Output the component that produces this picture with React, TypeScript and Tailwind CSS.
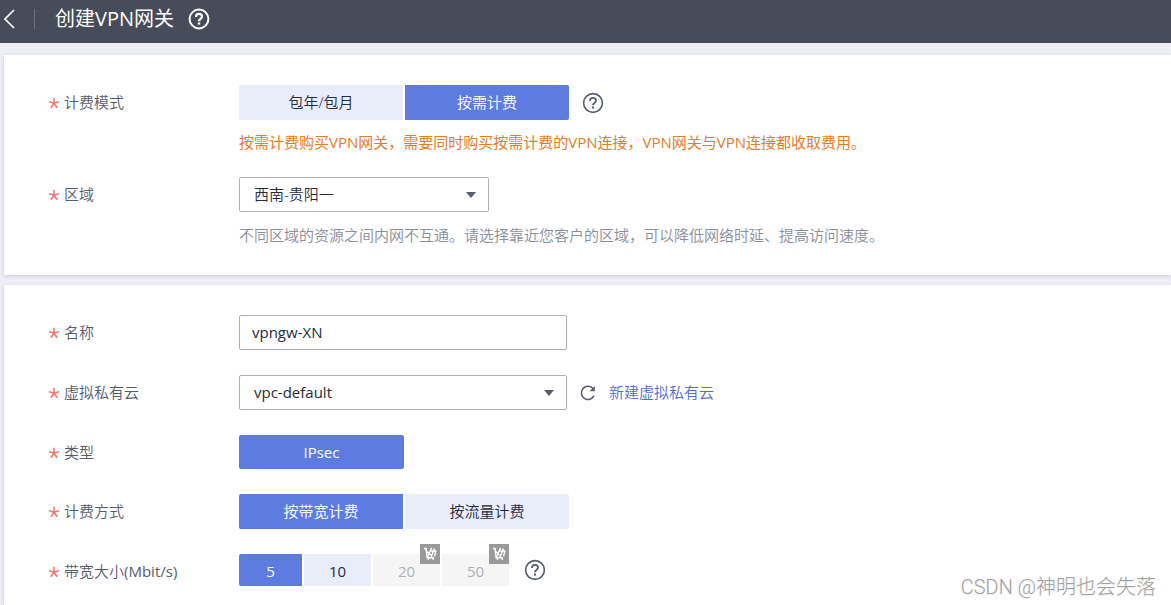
import type { ReactNode } from "react";
import { useState } from "react";

function HelpIcon({ className, width = 1.6 }: { className: string; width?: number }) {
  return (
    <svg viewBox="0 0 22 22" fill="none" stroke="currentColor" strokeWidth={width} className={className}>
      <circle cx="11" cy="11" r="9.4" />
      <path d="M8 8.9C8 6.9 9.2 5.9 11 5.9s3 1 3 2.6c0 1.2-.7 1.8-1.6 2.5-.9.6-1.4 1-1.4 2.3" strokeWidth={width + 0.2} />
      <path d="M11 14.5v2.1" strokeWidth={width + 0.5} />
    </svg>
  );
}

function CartIcon() {
  return (
    <svg viewBox="0 0 20 20" fill="none" stroke="white" className="h-5 w-5">
      <path d="M4 4.4h2l1.2 9.4h6.6" strokeWidth="1.5" />
      <path d="M6.4 7.2l5.6 4.6M11.6 3.8L8 12.6M9.4 7h6.4l-1.2 5.4M14.4 4.6l-3.4 8.6" strokeWidth="1.4" />
      <circle cx="8.4" cy="15" r="0.7" fill="white" strokeWidth="0.6" />
      <circle cx="13.2" cy="15" r="0.7" fill="white" strokeWidth="0.6" />
    </svg>
  );
}

function Required() {
  return (
    <svg viewBox="0 0 12 12" fill="none" stroke="#f66f6a" strokeWidth="1.5" aria-hidden="true" className="mt-0.5 h-3 w-3 shrink-0">
      <path d="M6 .8v5.4M.8 4.6L6 6.2l5.2-1.6M2.8 10.8L6 6.2l3.2 4.6" />
    </svg>
  );
}

type RowProps = {
  label: string;
  unit?: string;
  htmlFor?: string;
  children: ReactNode;
};

function Row({ label, unit, htmlFor, children }: RowProps) {
  return (
    <div className="flex items-start">
      <div className="flex h-[33px] w-[191px] shrink-0 items-center gap-1 text-[#575d6c]">
        <Required />
        {htmlFor ? (
          <label htmlFor={htmlFor}>{label}</label>
        ) : (
          <span>
            {label}
            {unit && <span className="font-normal">({unit})</span>}
          </span>
        )}
      </div>
      <div className="min-w-0 flex-1">{children}</div>
    </div>
  );
}

type SegmentsProps = {
  label: string;
  options: string[];
  value: string;
  onChange: (value: string) => void;
};

function Segments({ label, options, value, onChange }: SegmentsProps) {
  return (
    <div role="group" aria-label={label} className="flex gap-0.5">
      {options.map((option) => (
        <button
          key={option}
          type="button"
          aria-pressed={option === value}
          onClick={() => onChange(option)}
          className={
            option === value
              ? "h-[35px] w-[164px] bg-[#5e7ce0] pb-0.5 text-white first:rounded-l-xs last:rounded-r-xs"
              : "h-[35px] w-[164px] bg-[#e9edfa] pb-0.5 text-[#252b3a] first:rounded-l-xs last:rounded-r-xs"
          }
        >
          {option}
        </button>
      ))}
    </div>
  );
}

function Select({ id, options, className }: { id: string; options: string[]; className: string }) {
  return (
    <div className={`relative ${className}`}>
      <select
        id={id}
        className="block h-[35px] w-full appearance-none rounded-xs border border-[#adb0b8] bg-white px-3.5 pb-0.5 text-[#252b3a]"
      >
        {options.map((option) => (
          <option key={option}>{option}</option>
        ))}
      </select>
      <svg viewBox="0 0 10 6" className="pointer-events-none absolute top-[15px] right-[13px] h-1.5 w-2.5 fill-[#575d6c]">
        <path d="M0 0h10L5 6z" />
      </svg>
    </div>
  );
}

const bandwidths = [
  { size: 5, soldOut: false },
  { size: 10, soldOut: false },
  { size: 20, soldOut: true },
  { size: 50, soldOut: true },
];

export default function App() {
  const [billing, setBilling] = useState("按需计费");
  const [method, setMethod] = useState("按带宽计费");
  const [bandwidth, setBandwidth] = useState(5);
  const [name, setName] = useState("vpngw-XN");

  return (
    <div className="relative flex min-h-screen flex-col bg-[#eeeff6] font-['Open_Sans','Noto_Sans_CJK_SC',sans-serif] text-[15px] leading-5 font-[360]">
      <header className="flex h-[43px] items-center bg-[#464c59] pb-1.5 text-white">
        <button type="button" aria-label="返回" className="pl-1">
          <svg viewBox="0 0 11 20" fill="none" stroke="currentColor" strokeWidth="1.6" className="h-5 w-[11px]">
            <path d="M10 1L1 10l9 9" />
          </svg>
        </button>
        <span className="ml-[19px] h-5 w-px bg-[#6c717d]" />
        <h1 className="ml-5 text-xl leading-7 font-normal">创建VPN网关</h1>
        <button type="button" aria-label="帮助" className="ml-3.5">
          <HelpIcon className="h-[22px] w-[22px]" width={2} />
        </button>
      </header>

      <main className="mt-3 ml-1 flex flex-1 flex-col gap-2.5">
        <section className="flex flex-col gap-[25px] bg-white pt-[30px] pb-[30px] pl-11 shadow-[0_1px_4px_rgba(0,0,0,0.15)]">
          <Row label="计费模式">
            <div className="flex items-center gap-[13px]">
              <Segments label="计费模式" options={["包年/包月", "按需计费"]} value={billing} onChange={setBilling} />
              <button type="button" aria-label="帮助" className="text-[#575d6c]">
                <HelpIcon className="h-[22px] w-[22px]" />
              </button>
            </div>
            <p className="mt-3 font-normal text-[#e37d29]">
              按需计费购买VPN网关，需要同时购买按需计费的VPN连接，VPN网关与VPN连接都收取费用。
            </p>
          </Row>
          <Row label="区域" htmlFor="region">
            <Select id="region" options={["西南-贵阳一"]} className="w-[250px]" />
            <p className="mt-[13px] text-[#8a8e99]">
              不同区域的资源之间内网不互通。请选择靠近您客户的区域，可以降低网络时延、提高访问速度。
            </p>
          </Row>
        </section>

        <section className="flex flex-1 flex-col gap-[25px] bg-white pt-[30px] pl-11 shadow-[0_1px_4px_rgba(0,0,0,0.15)]">
          <Row label="名称" htmlFor="name">
            <input
              id="name"
              value={name}
              onChange={(e) => setName(e.target.value)}
              className="block h-[35px] w-[328px] rounded-xs border border-[#adb0b8] px-3 pb-0.5 font-normal text-[#252b3a]"
            />
          </Row>
          <Row label="虚拟私有云" htmlFor="vpc">
            <div className="flex items-center">
              <Select id="vpc" options={["vpc-default"]} className="w-[328px] font-normal" />
              <button type="button" aria-label="刷新" className="ml-[13px] text-[#575d6c]">
                <svg viewBox="0 0 16 16" fill="none" stroke="currentColor" strokeWidth="1.5" className="h-4 w-4">
                  <path d="M14 10.6A6.6 6.6 0 1 1 13.2 3.8" />
                  <path d="M14.8 1v5.2H9.6z" fill="currentColor" stroke="none" />
                </svg>
              </button>
              <a href="#vpc" className="ml-[13px] pb-0.5 text-[#526ecc]">
                新建虚拟私有云
              </a>
            </div>
          </Row>
          <Row label="类型">
            <button type="button" className="block h-[34px] w-[165px] rounded-xs bg-[#5e7ce0] font-normal text-white">
              IPsec
            </button>
          </Row>
          <Row label="计费方式">
            <Segments label="计费方式" options={["按带宽计费", "按流量计费"]} value={method} onChange={setMethod} />
          </Row>
          <Row label="带宽大小" unit="Mbit/s">
            <div className="flex items-center gap-[15px]">
              <div role="group" aria-label="带宽大小" className="flex gap-0.5 font-normal">
                {bandwidths.map(({ size, soldOut }) =>
                  soldOut ? (
                    <button
                      key={size}
                      type="button"
                      disabled
                      className="relative h-8 w-[67px] bg-[#f5f5f5] pt-0.5 text-[#adb0b8] last:rounded-r-xs"
                    >
                      {size}
                      <span className="absolute -top-2.5 right-0 bg-[#999999]">
                        <CartIcon />
                      </span>
                    </button>
                  ) : (
                    <button
                      key={size}
                      type="button"
                      aria-pressed={size === bandwidth}
                      onClick={() => setBandwidth(size)}
                      className={
                        size === bandwidth
                          ? "h-8 w-[63px] bg-[#5e7ce0] pt-0.5 text-white first:rounded-l-xs"
                          : "h-8 w-[67px] bg-[#e9edfa] pt-0.5 text-[#252b3a] first:rounded-l-xs"
                      }
                    >
                      {size}
                    </button>
                  )
                )}
              </div>
              <button type="button" aria-label="帮助" className="text-[#575d6c]">
                <HelpIcon className="h-[22px] w-[22px]" />
              </button>
            </div>
          </Row>
        </section>
      </main>

      <div className="absolute right-[15px] bottom-1 font-[Roboto,'Noto_Sans_CJK_SC',sans-serif] text-xl leading-7 font-light text-[#a0a0a0] [text-shadow:-1px_1px_0_#f0f0f0]">
        CSDN @神明也会失落
      </div>
    </div>
  );
}
